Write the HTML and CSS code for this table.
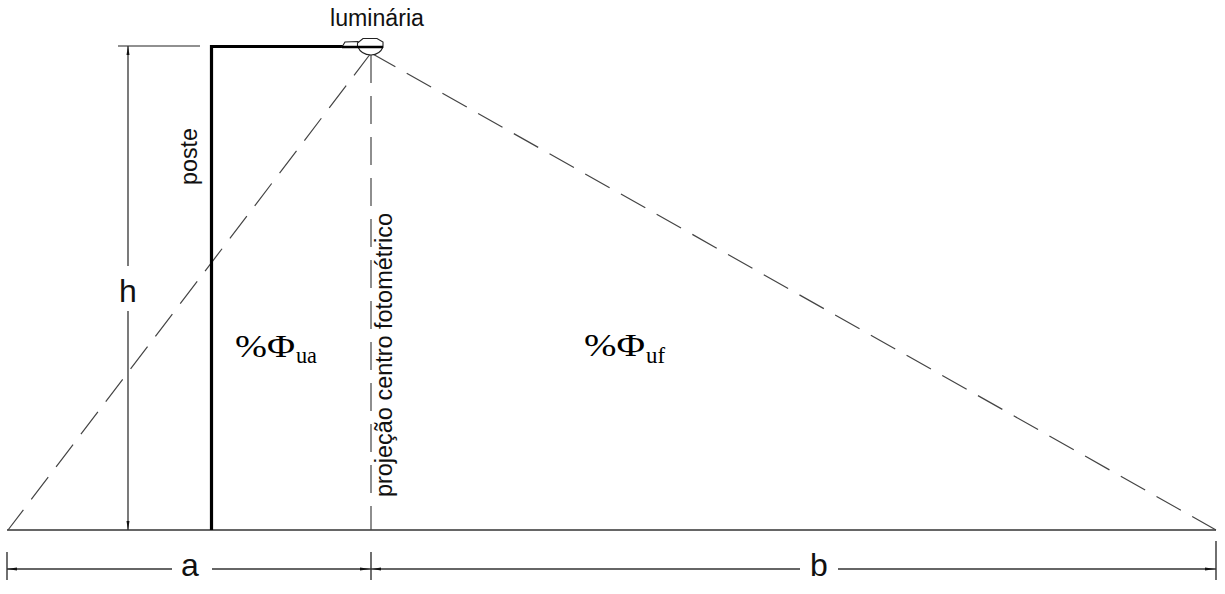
FILE: index.html
```html
<!DOCTYPE html>
<html lang="pt">
<head>
<meta charset="utf-8">
<title>Poste e luminária</title>
<link rel="stylesheet" href="styles.css">
</head>
<body>
<main class="page">
<svg class="diagram" width="1225" height="594" viewBox="0 0 1225 594" xmlns="http://www.w3.org/2000/svg">
  <!-- ground line -->
  <line class="ground" x1="7" y1="530" x2="1216" y2="530"/>

  <!-- light rays -->
  <line class="ray" x1="371" y1="53" x2="8" y2="530"/>
  <line class="ray" x1="371" y1="53" x2="1216" y2="530"/>
  <line class="ray" x1="371" y1="55" x2="371" y2="530"/>

  <!-- pole and arm -->
  <polyline class="pole" points="211.5,530 211.5,46.5 343,46.5"/>

  <!-- luminaire -->
  <g class="lum">
    <polygon points="342,47 345,42 358,41.5 358,47"/>
    <path d="M357.5,47 L357.5,43 L363,38.5 L377,38.5 L383,42 L383,47 Z"/>
    <path d="M358,47 Q361,54.5 371,55 Q380,54.5 383,47"/>
    <line class="lumbar" x1="342" y1="47" x2="383" y2="47"/>
  </g>

  <!-- h dimension -->
  <line class="ext" x1="118" y1="46" x2="200" y2="46"/>
  <line class="dim" x1="128" y1="46" x2="128" y2="266"/>
  <line class="dim" x1="128" y1="311" x2="128" y2="530"/>
  <polygon class="arrow" points="128,46 126.5,55 129.5,55"/>
  <polygon class="arrow" points="128,530 126.5,521 129.5,521"/>

  <!-- a / b dimension -->
  <line class="tick" x1="7" y1="552" x2="7" y2="580"/>
  <line class="tick" x1="371" y1="552" x2="371" y2="580"/>
  <line class="tick" x1="1216" y1="541" x2="1216" y2="580"/>
  <line class="dim" x1="7" y1="569" x2="172" y2="569"/>
  <line class="dim" x1="212" y1="569" x2="371" y2="569"/>
  <line class="dim" x1="371" y1="569" x2="800" y2="569"/>
  <line class="dim" x1="838" y1="569" x2="1216" y2="569"/>
  <polygon class="arrow" points="7,569 17,567.5 17,570.5"/>
  <polygon class="arrow" points="370,569 360,567.5 360,570.5"/>
  <polygon class="arrow" points="372,569 381,567.5 381,570.5"/>
  <polygon class="arrow" points="1215,569 1205,567.5 1205,570.5"/>

  <!-- labels -->
  <text class="label" x="330" y="26" textLength="94" lengthAdjust="spacingAndGlyphs">luminária</text>
  <text class="label" transform="translate(197,185) rotate(-90)" x="0" y="0" textLength="57" lengthAdjust="spacingAndGlyphs">poste</text>
  <text class="label" transform="translate(392,497) rotate(-90)" x="0" y="0" textLength="284" lengthAdjust="spacingAndGlyphs">projeção centro fotométrico</text>
  <text class="big" x="128" y="302" text-anchor="middle">h</text>
  <text class="big" x="190" y="576" text-anchor="middle">a</text>
  <text class="big" x="819" y="576" text-anchor="middle">b</text>

  <text class="phi" x="235" y="357" textLength="60" lengthAdjust="spacingAndGlyphs">%Φ</text>
  <text class="sub" x="296" y="363" textLength="21" lengthAdjust="spacingAndGlyphs">ua</text>
  <text class="phi" x="584" y="356" textLength="61" lengthAdjust="spacingAndGlyphs">%Φ</text>
  <text class="sub" x="646" y="363" textLength="19" lengthAdjust="spacingAndGlyphs">uf</text>
</svg>
</main>
</body>
</html>
```

FILE: styles.css
```css
html, body {
  margin: 0;
  padding: 0;
  background: #ffffff;
}

.page {
  width: 1225px;
  height: 594px;
  overflow: hidden;
}

.diagram {
  display: block;
}

.ground {
  stroke: #333333;
  stroke-width: 1.6;
}

.ray {
  stroke: #444444;
  stroke-width: 1.2;
  stroke-dasharray: 28 13;
  fill: none;
}

.pole {
  stroke: #000000;
  stroke-width: 3.2;
  fill: none;
}

.lum path,
.lum polygon {
  fill: #ffffff;
  stroke: #222222;
  stroke-width: 1.1;
}

.lumbar {
  stroke: #000000;
  stroke-width: 2.4;
}

.ext {
  stroke: #222222;
  stroke-width: 1.2;
}

.dim {
  stroke: #333333;
  stroke-width: 1.3;
}

.tick {
  stroke: #333333;
  stroke-width: 1.4;
}

.arrow {
  fill: #111111;
}

.label {
  font-family: "Liberation Sans", Arial, sans-serif;
  font-size: 23px;
  fill: #111111;
}

.big {
  font-family: "Liberation Sans", Arial, sans-serif;
  font-size: 32px;
  fill: #111111;
}

.phi {
  font-family: "Liberation Serif", "Times New Roman", serif;
  font-size: 32px;
  fill: #000000;
}

.sub {
  font-family: "Liberation Serif", "Times New Roman", serif;
  font-size: 24px;
  fill: #000000;
}
```
